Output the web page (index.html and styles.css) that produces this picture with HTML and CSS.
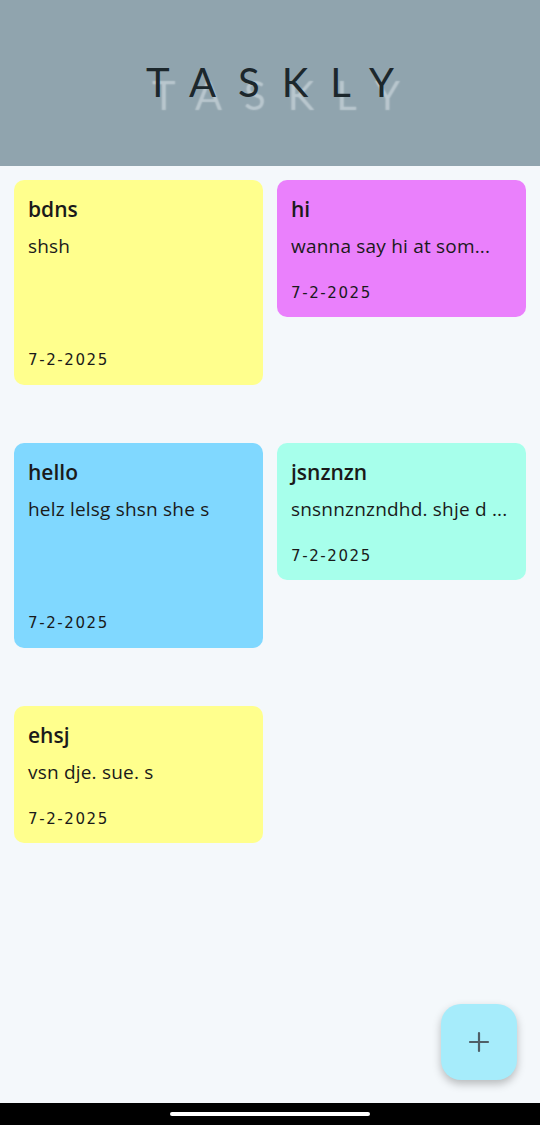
FILE: index.html
```html
<!DOCTYPE html>
<html>
<head>
<meta charset="utf-8">
<link rel="stylesheet" href="styles.css">
</head>
<body>
<div class="app">
  <header class="header"><h1 class="logo">TASKLY</h1></header>
  <main class="grid">
    <div class="card yellow tall">
      <div class="title">bdns</div>
      <div class="body">shsh</div>
      <div class="date">7-2-2025</div>
    </div>
    <div class="card purple">
      <div class="title">hi</div>
      <div class="body">wanna say hi at som...</div>
      <div class="date">7-2-2025</div>
    </div>
    <div class="card blue tall">
      <div class="title">hello</div>
      <div class="body">helz lelsg shsn she s</div>
      <div class="date">7-2-2025</div>
    </div>
    <div class="card teal">
      <div class="title">jsnznzn</div>
      <div class="body">snsnnznzndhd. shje d ...</div>
      <div class="date">7-2-2025</div>
    </div>
    <div class="card yellow">
      <div class="title">ehsj</div>
      <div class="body">vsn dje. sue. s</div>
      <div class="date">7-2-2025</div>
    </div>
  </main>
  <button class="fab" aria-label="Add">
    <svg width="24" height="24" viewBox="0 0 24 24"><path d="M12 3v18M3 12h18" stroke="#4f5f67" stroke-width="2.2" stroke-linecap="round" fill="none"/></svg>
  </button>
  <div class="navbar"><div class="pill"></div></div>
</div>
</body>
</html>
```
FILE: styles.css
```css
html, body {
  margin: 0;
  padding: 0;
}
body {
  font-family: "Open Sans", "Noto Sans", sans-serif;
  background: #f4f8fb;
}
.app {
  position: relative;
  width: 540px;
  height: 1125px;
  display: flex;
  flex-direction: column;
  overflow: hidden;
}
.header {
  height: 166px;
  flex: none;
  background: #90a4ae;
  display: flex;
  align-items: center;
  justify-content: center;
}
.logo {
  margin: 0 0 0 22px;
  font-family: Lato, "Open Sans", sans-serif;
  font-weight: 400;
  font-size: 40px;
  letter-spacing: 22px;
  color: #1c272c;
  text-shadow: 6px 13px 1.5px rgba(214, 224, 229, 0.6);
  padding-bottom: 2px;
}
.grid {
  flex: 1;
  display: grid;
  grid-template-columns: repeat(2, minmax(0, 1fr));
  grid-auto-rows: 249px;
  column-gap: 14px;
  row-gap: 14px;
  padding: 14px;
  align-items: start;
}
.card {
  border-radius: 10px;
  padding: 14px 12px 0 14px;
  height: 137px;
  box-sizing: border-box;
  display: flex;
  flex-direction: column;
  color: #1a1a1a;
  min-width: 0;
}
.card.tall {
  height: 205px;
}
.yellow { background: #ffff8d; }
.purple { background: #ea80fc; }
.blue { background: #80d8ff; }
.teal { background: #a7ffeb; }
.title {
  font-size: 21px;
  font-weight: 600;
  line-height: 30px;
}
.body {
  font-size: 19px;
  letter-spacing: 0.2px;
  line-height: 26px;
  margin-top: 9px;
  white-space: nowrap;
}
.date {
  margin-top: auto;
  margin-bottom: 14px;
  font-family: "DejaVu Sans", sans-serif;
  font-size: 15px;
  letter-spacing: 1.6px;
  line-height: 22px;
}
.card:not(.tall) .date {
  margin-top: 23px;
}
.fab {
  position: absolute;
  left: 441px;
  top: 1004px;
  width: 76px;
  height: 76px;
  border: none;
  border-radius: 20px;
  background: #a6ecfb;
  box-shadow: 0 4px 8px rgba(0,0,0,0.25);
  display: flex;
  align-items: center;
  justify-content: center;
  padding: 0;
}
.navbar {
  height: 22px;
  flex: none;
  background: #000;
  display: flex;
  align-items: center;
  justify-content: center;
}
.pill {
  width: 200px;
  height: 4px;
  border-radius: 2px;
  background: #fff;
}
```
